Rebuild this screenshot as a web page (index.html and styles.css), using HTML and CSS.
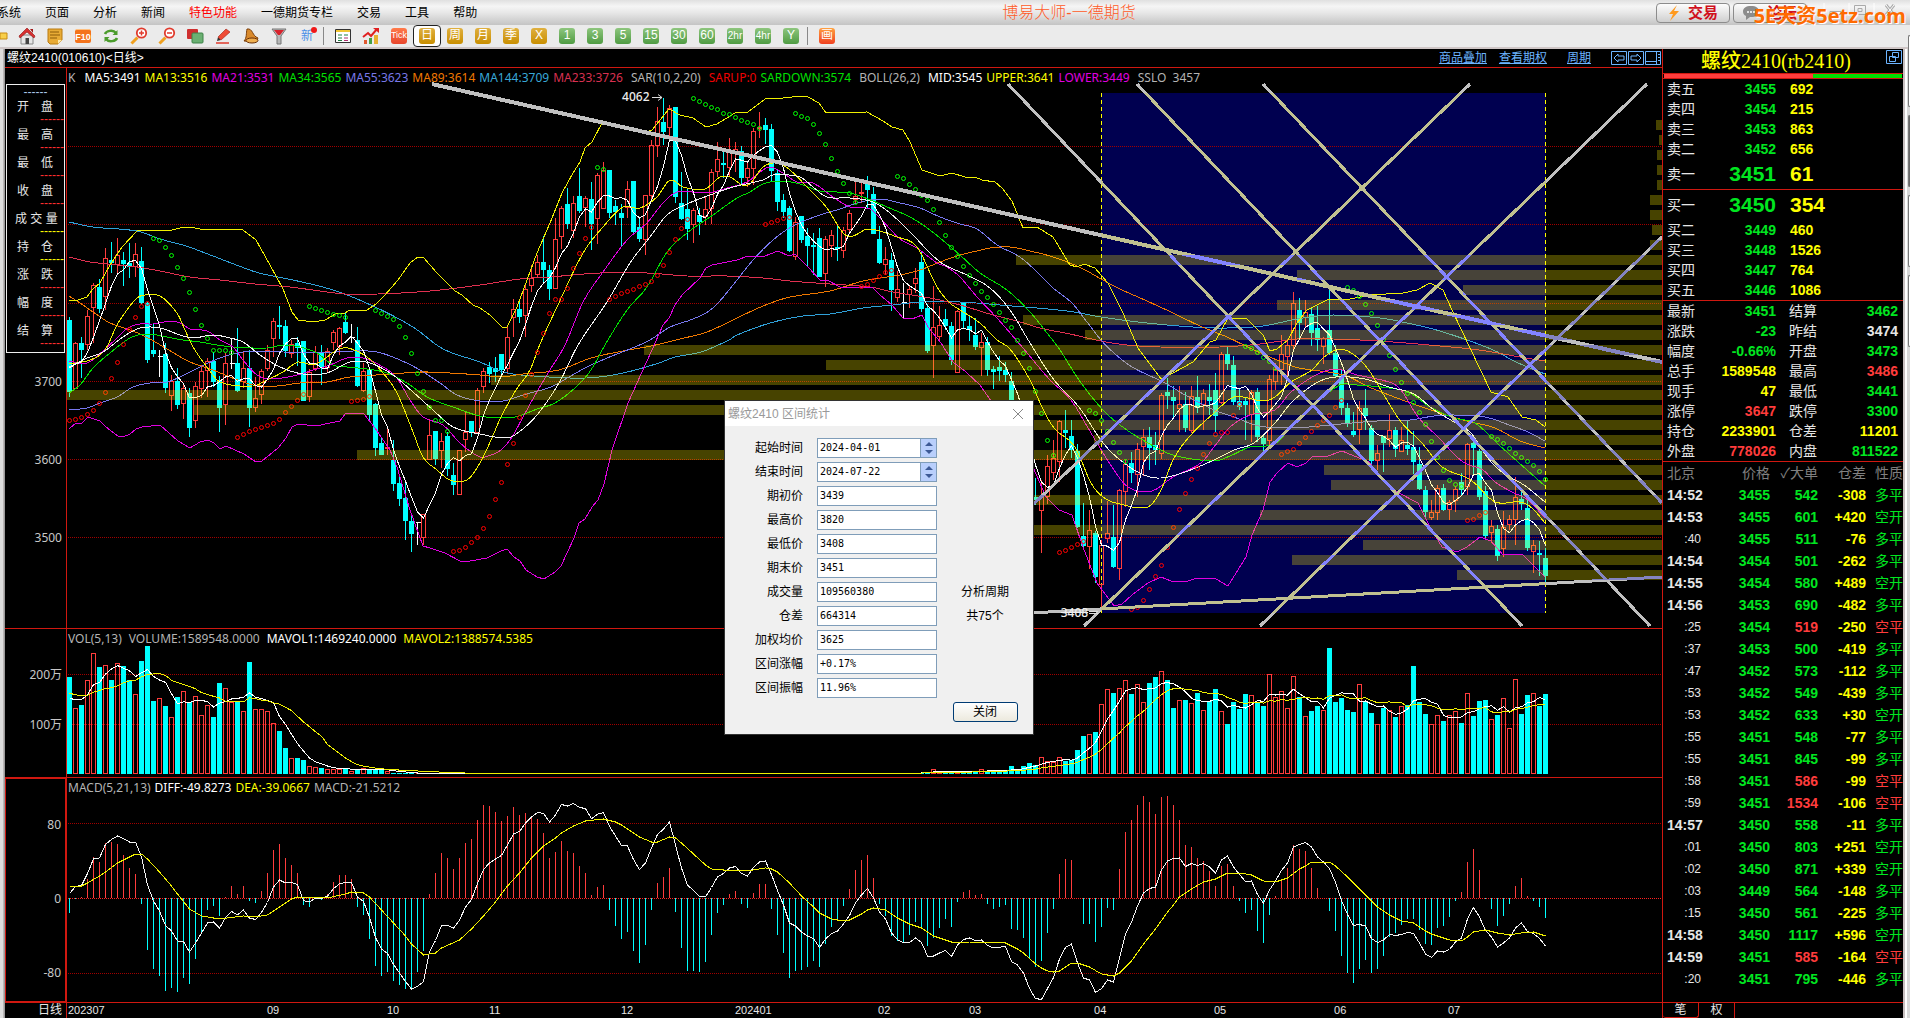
FILE: index.html
```html
<!DOCTYPE html>
<html lang="zh-CN">
<head>
<meta charset="utf-8">
<title>博易大师-一德期货</title>
<link rel="stylesheet" href="styles.css">
</head>
<body>
<div class="app">
  <header class="menubar">
    <nav class="menus">
      <a href="#">系统</a><a href="#">页面</a><a href="#">分析</a><a href="#">新闻</a><a href="#" class="hot">特色功能</a><a href="#">一德期货专栏</a><a href="#">交易</a><a href="#">工具</a><a href="#">帮助</a>
    </nav>
    <h1 class="apptitle">博易大师-一德期货</h1>
    <div class="winbar">
      <button class="pill"><svg width="12" height="16" viewBox="0 0 12 16"><path d="M9 0 1 9h4L2 16 11 6H6z" fill="#ff9a1e"/></svg>交易</button>
      <button class="pill"><svg width="16" height="14" viewBox="0 0 16 14"><path d="M8 0c5 0 8 2 8 5.500S13 11 8 11H7l-4 3V10C1 9 0 7.500 0 5.500 0 2 3 0 8 0z" fill="#8c8c8c"/><circle cx="5" cy="6" r="1" fill="#fff"/><circle cx="8" cy="6" r="1" fill="#fff"/><circle cx="11" cy="6" r="1" fill="#fff"/></svg>论坛</button>
      <svg class="winctl" width="84" height="16" viewBox="0 0 84 16" fill="none" stroke="#aaa"><path d="M2 0v13M27 0v13M52 0v13" stroke="#fff"/><path d="M8 8.500h11v3H8z" fill="#fff"/><path d="M32.500 2.500h11v9h-11zM36 5.500h4v3h-4z"/><path d="m64 2 8 10m0-10-8 10" stroke-width="3"/><path d="m64 2 8 10m0-10-8 10" stroke="#fff"/></svg>
      <span class="watermark">5E天资5etz.com</span>
    </div>
  </header>

  <div class="toolbar" role="toolbar" aria-label="工具栏">
    <button class="tool cut" aria-label="后退"><svg width="8" height="12" viewBox="0 0 8 12"><path d="M0 3h7v6H0z" fill="#f8cf4a" stroke="#c88a10"/></svg></button>
    <button class="tool" aria-label="首页"><svg width="18" height="18" viewBox="0 0 18 18"><path d="M3 8h12v9H3z" fill="#e6e6e6" stroke="#888"/><path d="M9 1 1 9l1 2 7-6 7 6 1-2z" fill="#d93030" stroke="#8a1010" stroke-width=".6"/><path d="M12 2h3v4z" fill="#a01818"/><path d="M7.500 11h3.500v6H7.500z" fill="#444"/></svg></button>
    <button class="tool" aria-label="报价"><svg width="18" height="18" viewBox="0 0 18 18"><path d="M2 2h14v11l-4 4H4l-2-2z" fill="#e8ab35" stroke="#b97a10"/><path d="M4 5h9M4 8h10M4 11h7" stroke="#8b5a08"/><path d="m12 17 4-4h-4z" fill="#ffe9a8"/></svg></button>
    <button class="tool" aria-label="F10"><span class="f10">F10</span></button>
    <button class="tool" aria-label="刷新"><svg width="18" height="18" viewBox="0 0 18 18" fill="none" stroke="#4c9c2c" stroke-width="2.500"><path d="M3 7c1-3 8-5 11-1M15 11c-1 3-8 5-11 1"/><path d="M15.500 3v5h-5zM2.500 15v-5h5z" fill="#4c9c2c" stroke="none"/></svg></button>
    <button class="tool" aria-label="放大"><svg width="18" height="18" viewBox="0 0 18 18" fill="none"><path d="m1.500 16.500 6-6" stroke="#f0a020" stroke-width="3"/><circle cx="11.500" cy="6" r="4.700" fill="#fff" stroke="#e03a2c" stroke-width="1.800"/><path d="M9 6h5M11.500 3.500v5" stroke="#e03a2c" stroke-width="1.500"/></svg></button>
    <button class="tool" aria-label="缩小"><svg width="18" height="18" viewBox="0 0 18 18" fill="none"><path d="m1.500 16.500 6-6" stroke="#f0a020" stroke-width="3"/><circle cx="11.500" cy="6" r="4.700" fill="#fff" stroke="#e03a2c" stroke-width="1.800"/><path d="M9 6h5" stroke="#e03a2c" stroke-width="1.500"/></svg></button>
    <button class="tool" aria-label="叠加"><svg width="18" height="18" viewBox="0 0 18 18"><rect x="1" y="2" width="11" height="10" rx="1" fill="#cf2f2f"/><rect x="6" y="6" width="11" height="10" rx="1" fill="#6bb072" stroke="#3f8248"/></svg></button>
    <button class="tool" aria-label="画线"><svg width="18" height="18" viewBox="0 0 18 18"><path d="M2 16h13" stroke="#e03a2c" stroke-width="1.500"/><path d="m3 14 1-4 3 3z" fill="#333"/><path d="m4 10 8-8 4 3-9 8z" fill="#ef4b35" stroke="#a02014" stroke-width=".6"/></svg></button>
    <button class="tool" aria-label="预警"><svg width="18" height="18" viewBox="0 0 18 18"><path d="M5 2c6-1 5 7 11 9l-2 4L2 14c3-3 2-8 3-12z" fill="#d98a2c" stroke="#7a3d08"/><ellipse cx="10" cy="13.500" rx="6" ry="2.500" fill="#f0b050" stroke="#6b2f08"/></svg></button>
    <button class="tool" aria-label="筛选"><svg width="18" height="18" viewBox="0 0 18 18"><path d="M2 2h14l-5 7v8H7V9z" fill="#b8b8b8" stroke="#777"/><path d="M4 3h10l-4 5H8z" fill="#d8222c"/></svg></button>
    <button class="tool" aria-label="新"><span class="newmark">新</span></button>
    <i class="sep"></i>
    <button class="tool" aria-label="表格"><svg width="18" height="18" viewBox="0 0 18 18"><path d="M1.500 2.500h15v13h-15z" fill="#fff" stroke="#333"/><path d="M2 3h14v2H2z" fill="#f2c530"/><path d="M4 8h4M4 11h4M4 13.500h4M10 8h4" stroke="#208040"/><path d="M10 11h4M10 13.500h4" stroke="#b03070"/></svg></button>
    <button class="tool" aria-label="走势"><svg width="18" height="18" viewBox="0 0 18 18"><path d="M2 13h3v4H2z" fill="#e05a30"/><path d="M7 11h3v6H7z" fill="#45a045"/><path d="M12 8h4v9h-4z" fill="#e8b030"/><path d="m1 10 5-4 3 3 6-7" fill="none" stroke="#e02020" stroke-width="2"/><path d="M11 1h6v5z" fill="#e02020"/></svg></button>
    <button class="tool"><span class="key red">Tick</span></button>
    <button class="tool on"><span class="key gold">日</span></button>
    <button class="tool"><span class="key gold">周</span></button>
    <button class="tool"><span class="key gold">月</span></button>
    <button class="tool"><span class="key gold">季</span></button>
    <button class="tool"><span class="key gold">X</span></button>
    <button class="tool"><span class="key green">1</span></button>
    <button class="tool"><span class="key green">3</span></button>
    <button class="tool"><span class="key green">5</span></button>
    <button class="tool"><span class="key green">15</span></button>
    <button class="tool"><span class="key green">30</span></button>
    <button class="tool"><span class="key green">60</span></button>
    <button class="tool"><span class="key green tight">2hr</span></button>
    <button class="tool"><span class="key green tight">4hr</span></button>
    <button class="tool"><span class="key green">Y</span></button>
    <i class="sep"></i>
    <button class="tool"><span class="key flame">画</span></button>
  </div>

  <main class="workspace">
    <div class="edge left"></div>
    <section class="chart">
      <div class="chart-head">
        <h2>螺纹2410(010610)&lt;日线&gt;</h2>
        <nav>
          <a href="#">商品叠加</a><a href="#">查看期权</a><a href="#">周期</a>
          <svg width="50" height="14" viewBox="0 0 50 14" fill="none" stroke="#6cb4ff"><path d="M.5.5h15v13H.5zM17.500.5h15v13h-15zM34.500.5h15v13h-15z"/><path d="m3 7 4-4v2h6v4H7v2zM30 7l-4-4v2h-6v4h6v2z"/><path d="M34 10.500h12M45.500 1v12"/><path d="M47 3.500h2M47 6.500h2M47 9.500h2"/></svg>
        </nav>
      </div>

      <div class="axis price-axis">
        <div class="databox">
          <span class="dashes blue">------</span>
          <dl>
            <dt>开　盘<dd>------
            <dt>最　高<dd>------
            <dt>最　低<dd>------
            <dt>收　盘<dd>------
            <dt class="wide">成 交 量<dd class="y">------
            <dt>持　仓<dd class="y">------
            <dt>涨　跌<dd>------
            <dt>幅　度<dd>------
            <dt>结　算<dd>------
          </dl>
        </div>
        <span class="tick" style="top:56%">3700</span><span class="tick" style="top:70%">3600</span><span class="tick" style="top:84%">3500</span>
      </div>
      <div class="plot">
        <svg id="price" viewBox="67 68 1595 560" preserveAspectRatio="none"></svg>
        <p class="legend"><span class="k">K</span><span class="w">MA5:3491</span><span class="y">MA13:3516</span><span class="m">MA21:3531</span><span class="g">MA34:3565</span><span class="p">MA55:3623</span><span class="o">MA89:3614</span><span class="b">MA144:3709</span><span class="c">MA233:3726</span><span class="grp">SAR(10,2,20)</span><span class="r">SARUP:0</span><span class="g">SARDOWN:3574</span><span class="grp">BOLL(26,2)</span><span class="w">MID:3545</span><span class="y">UPPER:3641</span><span class="m">LOWER:3449</span><span class="grp">SSLO&nbsp; 3457</span></p>
        <span class="mark high">4062<svg width="13" height="9" viewBox="0 0 13 9" fill="none" stroke="#ddd"><path d="M2 4.500h10M8 1.500l4 3-4 3"/></svg></span>
        <span class="mark low">3408<svg width="10" height="9" viewBox="0 0 10 9" fill="none" stroke="#ddd"><path d="M1 3.500h9M1 5.500h9"/></svg></span>
      </div>

      <div class="axis"><span class="tick" style="top:31%">200万</span><span class="tick" style="top:65%">100万</span></div>
      <div class="plot">
        <svg id="volume" viewBox="67 629 1595 148" preserveAspectRatio="none"></svg>
        <p class="legend loose"><span>VOL(5,13)</span><span>VOLUME:1589548.0000</span><span class="w">MAVOL1:1469240.0000</span><span class="y">MAVOL2:1388574.5385</span></p>
      </div>

      <div class="axis active"><span class="tick" style="top:20.500%">80</span><span class="tick" style="top:54%">0</span><span class="tick" style="top:87.500%">-80</span></div>
      <div class="plot">
        <svg id="macd" viewBox="67 778 1595 224" preserveAspectRatio="none"></svg>
        <p class="legend"><span>MACD(5,21,13)</span><span class="w">DIFF:-49.8273</span><span class="y">DEA:-39.0667</span><span>MACD:-21.5212</span></p>
      </div>

      <div class="axis foot">日线</div>
      <div class="plot dates" id="dates"></div>
    </section>

    <aside class="quote">
      <div class="qhead"><h2>螺纹2410(rb2410)</h2><button aria-label="还原"><svg width="16" height="14" viewBox="0 0 16 14" fill="none" stroke="#6cb4ff"><path d="M.5.5h15v13H.5z"/><path d="M6.500 2.500h6v5h-6zM3.500 6.500h6v5h-6z" fill="#000"/></svg></button></div>
      <div class="ratio"><i class="sell"></i><i class="buy"></i></div>
      <table class="book">
        <tbody>
        <tr><th>卖五<td class="g">3455<td>692
        <tr><th>卖四<td class="g">3454<td>215
        <tr><th>卖三<td class="g">3453<td>863
        <tr><th>卖二<td class="g">3452<td>656
        <tr class="best"><th>卖一<td class="g">3451<td>61
        </tbody>
      </table>
      <table class="book">
        <tbody>
        <tr class="best"><th>买一<td class="g">3450<td>354
        <tr><th>买二<td class="g">3449<td>460
        <tr><th>买三<td class="g">3448<td>1526
        <tr><th>买四<td class="g">3447<td>764
        <tr><th>买五<td class="g">3446<td>1086
        </tbody>
      </table>
      <table class="stats">
        <tbody>
        <tr><th>最新<td class="g">3451<th>结算<td class="g">3462
        <tr><th>涨跌<td class="g">-23<th>昨结<td class="w">3474
        <tr><th>幅度<td class="g">-0.66%<th>开盘<td class="g">3473
        <tr><th>总手<td class="y">1589548<th>最高<td class="r">3486
        <tr><th>现手<td class="y">47<th>最低<td class="g">3441
        <tr><th>涨停<td class="r">3647<th>跌停<td class="g">3300
        <tr><th>持仓<td class="y">2233901<th>仓差<td class="y">11201
        <tr><th>外盘<td class="r">778026<th>内盘<td class="g">811522
        </tbody>
      </table>
      <table class="deals">
        <thead><tr><th>北京<th>价格<th>✓大单<th>仓差<th>性质</thead>
        <tbody>
        <tr><th>14:52<td>3455<td>542<td>-308<td>多平
        <tr><th>14:53<td>3455<td>601<td>+420<td>空开
        <tr><th class="s">:40<td>3455<td>511<td>-76<td>多平
        <tr><th>14:54<td>3454<td>501<td>-262<td>多平
        <tr><th>14:55<td>3454<td>580<td>+489<td>空开
        <tr><th>14:56<td>3453<td>690<td>-482<td>多平
        <tr class="up"><th class="s">:25<td>3454<td>519<td>-250<td>空平
        <tr><th class="s">:37<td>3453<td>500<td>-419<td>多平
        <tr><th class="s">:47<td>3452<td>573<td>-112<td>多平
        <tr><th class="s">:53<td>3452<td>549<td>-439<td>多平
        <tr><th class="s">:53<td>3452<td>633<td>+30<td>空开
        <tr><th class="s">:55<td>3451<td>548<td>-77<td>多平
        <tr><th class="s">:55<td>3451<td>845<td>-99<td>多平
        <tr class="up"><th class="s">:58<td>3451<td>586<td>-99<td>空平
        <tr class="up"><th class="s">:59<td>3451<td>1534<td>-106<td>空平
        <tr><th>14:57<td>3450<td>558<td>-11<td>多平
        <tr><th class="s">:01<td>3450<td>803<td>+251<td>空开
        <tr><th class="s">:02<td>3450<td>871<td>+339<td>空开
        <tr><th class="s">:03<td>3449<td>564<td>-148<td>多平
        <tr><th class="s">:15<td>3450<td>561<td>-225<td>多平
        <tr><th>14:58<td>3450<td>1117<td>+596<td>空开
        <tr class="up"><th>14:59<td>3451<td>585<td>-164<td>空平
        <tr><th class="s">:20<td>3451<td>795<td>-446<td>多平
        </tbody>
      </table>
      <div class="tabs"><button class="cur">笔</button><button>权</button></div>
    </aside>
    <div class="edge right"><i></i><i class="dark"></i><i></i><i></i></div>
  </main>

  <form class="dialog" role="dialog" aria-label="区间统计">
    <div class="dlg-title"><span>螺纹2410 区间统计</span><button type="button" aria-label="关闭窗口"><svg width="12" height="12" viewBox="0 0 12 12" stroke="#888"><path d="m1 1 10 10M11 1 1 11"/></svg></button></div>
    <div class="dlg-body">
      <div class="fields">
        <label for="f1">起始时间</label><span class="spin"><input id="f1" value="2024-04-01"><button type="button" aria-label="调整"><svg width="8" height="14" viewBox="0 0 8 14"><path d="m0 5 4-4 4 4zM0 9l4 4 4-4z" fill="#3d5a96"/></svg></button></span>
        <label for="f2">结束时间</label><span class="spin"><input id="f2" value="2024-07-22"><button type="button" aria-label="调整"><svg width="8" height="14" viewBox="0 0 8 14"><path d="m0 5 4-4 4 4zM0 9l4 4 4-4z" fill="#3d5a96"/></svg></button></span>
        <label for="f3">期初价</label><input id="f3" value="3439">
        <label for="f4">最高价</label><input id="f4" value="3820">
        <label for="f5">最低价</label><input id="f5" value="3408">
        <label for="f6">期末价</label><input id="f6" value="3451">
        <label for="f7">成交量</label><input id="f7" value="109560380">
        <label for="f8">仓差</label><input id="f8" value="664314">
        <label for="f9">加权均价</label><input id="f9" value="3625">
        <label for="f10">区间涨幅</label><input id="f10" value="+0.17%">
        <label for="f11">区间振幅</label><input id="f11" value="11.96%">
      </div>
      <div class="side"><p>分析周期</p><p>共75个</p><button type="button" class="ok">关闭</button></div>
    </div>
  </form>
</div>
<script src="chart.js"></script>
</body>
</html>
```
FILE: styles.css
```css
* { box-sizing: border-box; margin: 0; padding: 0; }
body { background: #000; font: 12px/14px "Liberation Sans", "Noto Sans CJK SC", sans-serif; color: #e6e6e6; overflow: hidden; }
button { border: 0; background: none; font: inherit; color: inherit; }
a { color: inherit; text-decoration: none; }
i { font-style: normal; }
.app { position: relative; height: 100vh; min-height: 760px; display: grid; grid-template-rows: 25px 24px 1fr; }

.menubar { display: grid; grid-template-columns: 1002fr auto 774fr; align-items: center; background: linear-gradient(#e0e0e0, #f5f5f5 25%, #e8e8e8 50%, #c4c4c4); color: #000; }
.menus { display: flex; gap: 24px; margin-left: -3px; white-space: nowrap; }
.menus .hot { color: #f00; }
.apptitle { font: 300 16px/24px "Liberation Sans", "Noto Sans CJK SC", sans-serif; color: #ff5a26; white-space: nowrap; }
.winbar { position: relative; display: flex; justify-content: flex-end; gap: 3px; padding-right: 4px; }
.pill { display: flex; align-items: center; justify-content: center; gap: 8px; width: 74px; height: 20px; border: 1px solid #8c8c8c; border-radius: 4px; background: linear-gradient(#fdfdfd, #cfcfcf); color: #d0101c; font-size: 15px; font-weight: 700; }
.winctl { margin-left: 12px; }
.watermark { position: absolute; right: 4px; top: 1px; font: 700 20px/24px "Open Sans", "Noto Sans CJK SC", sans-serif; color: #ff6a00; text-shadow: 1px 1px #fff; }

.toolbar { display: flex; align-items: center; background: #ebebeb; border-bottom: 2px solid #cfc6c6; }
.tool { width: 28px; height: 22px; display: flex; align-items: center; justify-content: center; flex: none; }
.tool.cut { width: 13px; justify-content: flex-start; }
.tool.on { border: 1px solid #222; border-radius: 4px; background: #fff; }
.sep { width: 8px; height: 18px; background: linear-gradient(90deg, transparent 2px, #888 2px, #888 3px, transparent 3px); }
.key { width: 16px; height: 16px; border-radius: 3px; font: 12px/15px "Liberation Sans", "Noto Sans CJK SC", sans-serif; color: #fff; text-align: center; display: flex; justify-content: center; }
.gold { background: linear-gradient(#dfb040, #c98e00); }
.green { background: linear-gradient(#8ec67e, #4f9b42); }
.red { background: linear-gradient(#ff7a4a, #e8452c); font-size: 9px; }
.tight { font-size: 10px; }
.flame { background: linear-gradient(#ffa040, #f04020); }
.f10 { width: 16px; height: 14px; border-radius: 2px; background: #f4731c; color: #fff; font: 700 9px/14px "Liberation Sans", sans-serif; border-top: 1px solid #ffc080; display: flex; justify-content: center; }
.newmark { position: relative; color: #4a90e8; font-size: 12px; }
.newmark::after { content: ""; position: absolute; right: -4px; top: -2px; width: 6px; height: 6px; border-radius: 50%; background: #f01818; }

.workspace { display: grid; grid-template-columns: 5px 1fr 240px 7px; min-height: 0; }
.edge.left { background: linear-gradient(90deg, #ddd 3px, #aaa 3px, #c8c0c0); border-right: 1px solid #999; }
.edge.right { border-left: 2px solid #c8c0c0; background: linear-gradient(90deg, #fff 2px, #d8d8d8 2px); padding: 20px 0 0 3px; }
.edge.right i { display: block; height: 72px; margin: 0 0 8px; background: #fff; border: 1px solid #777; border-right: 0; border-radius: 4px 0 0 4px; }
.edge.right .dark { background: #666; }
.edge.right i:first-child { margin-top: -34px; }

.chart { display: grid; grid-template-columns: 62px 1fr; grid-template-rows: 19px 561fr 149fr 225fr 15px; border-right: 1px solid #d01810; min-width: 0; min-height: 0; }
.chart-head { grid-column: 1 / 3; display: flex; justify-content: space-between; align-items: center; padding: 0 1px 0 2px; border-bottom: 1px solid #d01810; }
.chart-head h2 { font-size: 12px; font-weight: 400; color: #fff; }
.chart-head nav { display: flex; align-items: center; color: #6cb4ff; }
.chart-head a { margin-right: 12px; text-decoration: underline; }
.chart-head a + a { margin-right: 20px; }
.axis { position: relative; border-right: 1px solid #d01810; border-bottom: 1px solid #d01810; }
.axis.active { border: 1px solid #d01810; border-width: 1px 2px 2px 1px; }
.axis.foot { border-bottom: 0; text-align: right; padding-right: 4px; }
.plot { position: relative; border-bottom: 1px solid #d01810; min-width: 0; min-height: 0; }
.plot > svg { position: absolute; inset: 0; width: 100%; height: 100%; }
.plot.dates { border: 0; }
.dates span { position: absolute; top: 0; font-size: 11px; line-height: 15px; }
.tick { position: absolute; right: 4px; height: 14px; margin-top: -7px; font: 12px/14px "Noto Sans", "Noto Sans CJK SC", sans-serif; color: #c8c8c8; }
.databox { margin: 16px 1px 0 1px; height: 269px; border: 1px solid #eee; padding-top: 1px; }
.databox .dashes { display: block; text-align: center; line-height: 12px; }
.databox .blue { color: #a8c8e8; }
.databox dt { height: 18px; line-height: 18px; padding-left: 10px; white-space: nowrap; }
.databox dt.wide { padding-left: 8px; }
.databox dd { height: 10px; line-height: 7px; text-align: right; color: #ff3030; }
.databox dd.y { color: #ff0; }
.legend { position: absolute; left: 1px; top: 3px; display: flex; gap: 4px; font: 12px/14px "Noto Sans", sans-serif; color: #b4b4b4; white-space: nowrap; }
.legend.loose { gap: 7px; }
.legend .k { margin-right: 5px; }
.legend .grp { margin: 0 4px; }
.legend .w { color: #fff; }
.legend .y { color: #ff0; }
.legend .m { color: #e000e0; }
.legend .g { color: #00e000; }
.legend .p { color: #7878e8; }
.legend .o { color: #f07800; }
.legend .b { color: #38a8d8; }
.legend .c { color: #d83050; }
.legend .r { color: #f00000; }
.mark { position: absolute; display: flex; align-items: center; font: 500 12px/14px "Noto Sans", sans-serif; color: #eee; }
.mark.high { left: 34.800%; top: 4%; }
.mark.low { left: 62.300%; top: 96%; text-decoration: line-through; }

.quote { display: flex; flex-direction: column; min-height: 0; font-size: 14px; }
.qhead { position: relative; height: 24px; text-align: center; padding-right: 14px; }
.qhead h2 { font: 500 20px/25px "Liberation Serif", "Noto Sans CJK SC", serif; color: #ff0; }
.qhead button { position: absolute; right: 1px; top: 1px; height: 14px; display: flex; }
.ratio { height: 6px; display: flex; border: 1px solid #d01810; border-width: 1px 0; padding: 0 1px; }
.sell { flex: 150; background: #ff3c3c; }
.buy { flex: 89; background: #00e000; }
table { border-collapse: collapse; table-layout: fixed; width: 100%; }
.quote th { font-weight: 400; text-align: left; padding: 0; }
.quote td { font-weight: 700; padding: 0; }
.book { border-bottom: 1px solid #d01810; }
.book tr, .stats tr { height: 20px; line-height: 20px; }
.book tr.best { height: 30px; line-height: 30px; }
.book th { width: 59px; }
.book td:nth-child(2) { width: 54px; text-align: right; }
.book td:nth-child(3) { padding-left: 14px; color: #ff0; }
.best td { font-size: 21px; }
.quote .book th, .quote .stats th { padding-left: 4px; }
.stats { border-bottom: 1px solid #d01810; }
.stats th { width: 45px; }
.stats td:nth-child(2) { width: 68px; text-align: right; }
.stats th:nth-child(3) { width: 55px; }
.quote .stats th:nth-child(3) { padding-left: 13px; }
.stats td:nth-child(4) { text-align: right; padding-right: 5px; }
.quote .g { color: #00e620; }
.quote .y { color: #ff0; }
.quote .r { color: #ff3c3c; }
.quote .w { color: #e6e6e6; }
.deals tr { height: 22px; line-height: 22px; white-space: nowrap; }
.quote .deals thead th { color: #808080; text-align: right; }
.deals th:first-child { width: 50px; }
.quote .deals thead th:first-child { text-align: left; padding-left: 4px; }
.deals th:nth-child(2) { width: 57px; }
.deals th:nth-child(3), .deals th:nth-child(4) { width: 48px; }
.quote .deals tbody th { font-weight: 700; padding-left: 4px; }
.quote .deals tbody th.s { font-weight: 400; font-size: 12px; text-align: right; padding-right: 12px; }
.deals td { text-align: right; color: #00e620; }
.deals td:nth-child(4) { color: #ff0; }
.quote .deals td:nth-child(5) { font-weight: 400; }
.up td:nth-child(3), .up td:nth-child(5) { color: #ff3c3c; }
.tabs { margin-top: auto; height: 16px; display: flex; border-top: 1px solid #d01810; font-size: 12px; }
.tabs button { width: 36px; border-right: 1px solid #d01810; line-height: 15px; }
.tabs .cur { border-bottom: 1px solid #d01810; border-radius: 0 0 3px 3px; background: #000; }

.dialog { position: absolute; left: 724px; top: 400px; width: 310px; border: 1px solid #333; background: #f0f0f0; color: #000; }
.dlg-title { height: 25px; background: #fff; display: flex; justify-content: space-between; align-items: center; padding: 0 9px 0 3px; color: #999; }
.dlg-title button { height: 12px; }
.dlg-body { display: flex; align-items: flex-start; padding: 12px 0 12px 21px; }
.fields { display: grid; grid-template-columns: 57px 112px; grid-auto-rows: 20px; column-gap: 14px; row-gap: 4px; align-items: center; text-align: right; }
.fields { grid-template-columns: 57px 120px; }
.fields input { width: 100%; height: 20px; border: 1px solid #7f9db9; background: #fff; padding: 0 0 2px 2px; font: 10px/16px "DejaVu Sans Mono", monospace; color: #000; }
.spin { display: flex; border: 1px solid #7f9db9; height: 20px; }
.fields .spin input { border: 0; height: 18px; flex: 1; min-width: 0; }
.spin button { width: 16px; background: #b9cffc; border-left: 1px solid #7f9db9; display: flex; align-items: center; justify-content: center; }
.side { flex: 1; text-align: center; padding-top: 147px; }
.side p { height: 24px; }
.ok { width: 65px; height: 20px; margin-top: 69px; border: 1px solid #003c74; border-radius: 3px; background: linear-gradient(#fff, #ece9dd); }
```
FILE: chart.js
```js
var NS = 'http://www.w3.org/2000/svg';
var X0 = 69.5, STEP = 6;
function X(i) { return X0 + STEP * i; }
function add(host, tag, attrs) {
  var e = document.createElementNS(NS, tag);
  for (var k in attrs) e.setAttribute(k, attrs[k]);
  host.appendChild(e);
  return e;
}
function path(host, d, stroke, more) {
  var a = { d: d, stroke: stroke, fill: 'none', 'shape-rendering': 'crispEdges' };
  for (var k in more) a[k] = more[k];
  return add(host, 'path', a);
}
function poly(pts) { return 'M' + pts.map(function (p) { return p[0] + ' ' + p[1]; }).join('L'); }
function pairs(s) {
  return s.trim().split(/\s+/).map(function (p) { return p.split(',').map(Number); });
}
/* smooth curve through the key points */
function curve(s) {
  var p = pairs(s), out = [];
  for (var i = 0; i < p.length - 1; i++) {
    var a = p[Math.max(0, i - 1)], b = p[i], c = p[i + 1], e = p[Math.min(p.length - 1, i + 2)];
    var m1 = (c[1] - a[1]) / (c[0] - a[0]) * (c[0] - b[0]);
    var m2 = (e[1] - b[1]) / (e[0] - b[0]) * (c[0] - b[0]);
    for (var t = 0; t < 1; t += 0.25) {
      var t2 = t * t, t3 = t2 * t;
      out.push([b[0] + (c[0] - b[0]) * t,
        (2 * t3 - 3 * t2 + 1) * b[1] + (t3 - 2 * t2 + t) * m1 + (3 * t2 - 2 * t3) * c[1] + (t3 - t2) * m2]);
    }
  }
  out.push(p[p.length - 1]);
  return poly(out);
}

/* kind, high, body top, body bottom, low */
var candles = ('c317,320,392,397 r342,343,389,389 c337,343,350,378 r310,316,345,350 r283,285,308,343 c279,287,309,313 r248,258,297,310 c242,260,263,273 r238,255,265,275 c252,260,264,286 ' +
'c243,263,267,278 r243,254,267,277 c247,261,303,304 c302,303,360,363 c323,350,354,357 w350,356,357,377 c343,354,388,393 r375,381,396,411 c368,381,405,409 r384,388,404,419 ' +
'c388,393,428,437 r382,386,421,428 r365,371,389,398 r358,361,371,397 c352,361,382,387 c376,381,408,432 r353,363,405,425 w338,363,364,369 c328,363,391,392 r352,368,382,388 ' +
'c350,368,408,427 r377,398,408,412 r369,371,395,404 r345,350,369,371 r318,321,339,357 c306,325,327,339 c320,326,351,357 r340,344,354,358 c337,343,348,366 c341,341,401,401 ' +
'r369,372,397,402 r346,352,369,371 c345,352,367,385 r348,351,368,372 r330,332,343,350 r327,328,347,355 c312,322,333,334 w324,337,338,343 c327,340,386,387 r363,371,391,392 ' +
'c368,370,415,421 c403,404,448,456 c438,443,455,455 r426,447,449,455 c440,460,484,491 c475,483,499,506 c480,498,521,540 c514,521,534,552 w522,522,523,545 r514,514,538,545 ' +
'r419,435,460,460 c431,431,459,465 r433,441,451,468 c432,436,469,476 c463,475,485,495 r450,450,495,495 r412,432,440,452 c421,421,433,437 r388,390,433,433 r368,371,387,393 ' +
'c362,367,374,383 c357,368,372,382 c354,354,370,374 r327,337,369,374 r299,309,318,337 c302,309,317,323 r283,289,316,337 r265,278,286,292 r255,262,275,278 c236,262,270,283 ' +
'c265,270,289,300 r218,239,289,289 r206,208,237,249 c188,204,224,229 r196,203,231,238 c168,196,211,213 r196,198,208,227 c182,199,224,250 r173,175,219,244 r162,170,209,209 ' +
'c170,170,213,218 c200,206,212,225 c204,213,218,247 r181,189,208,218 c181,181,232,235 c218,227,239,242 r195,195,240,255 r140,145,196,202 r107,121,146,157 c98,122,132,145 ' +
'r105,108,128,138 c107,107,197,203 c172,203,219,220 c189,209,229,240 r208,210,225,243 c208,215,222,235 r197,209,217,225 r169,172,209,224 r142,159,172,177 c152,163,165,178 ' +
'r138,150,168,177 r142,149,152,172 c146,151,178,184 r163,168,178,187 r128,131,169,185 r112,127,129,138 c118,125,130,144 c124,129,171,182 c169,173,202,211 c194,200,212,218 ' +
'c206,208,251,252 r217,222,257,260 c216,216,240,243 c228,236,246,267 c233,245,247,275 c228,238,277,277 r236,239,274,287 r230,235,246,257 c225,247,249,261 r227,230,251,258 ' +
'r210,213,230,232 r182,196,200,203 r180,192,194,203 c176,183,190,208 c187,194,234,234 c226,239,263,264 r247,259,265,275 c253,260,290,311 r271,289,298,302 w283,302,302,318 ' +
'r285,289,295,308 r268,278,284,293 c252,262,309,312 c304,308,351,353 r286,327,346,378 r306,325,337,342 c309,319,326,330 c322,326,360,365 r310,311,373,373 c303,303,321,328 ' +
'c315,326,330,341 c318,335,347,350 r333,342,348,376 c337,342,370,376 c366,369,372,389 c356,367,371,381 c362,370,375,382 c372,381,410,415 c405,412,440,450 c430,440,470,480 ' +
'c465,470,505,510 c478,497,500,505 r480,496,511,553 r455,466,497,504 r440,458,473,480 r420,421,462,482 c410,430,433,448 c420,436,450,458 c444,451,527,528 c503,536,546,550 ' +
'r510,530,547,569 c531,533,577,583 r540,545,585,610 r501,533,539,543 c505,537,567,568 r489,490,569,580 r460,464,492,507 c452,463,473,483 r443,449,475,497 r429,437,447,476 ' +
'c427,437,448,470 c432,445,450,465 r393,395,454,459 c378,392,396,409 c386,397,401,418 r386,404,409,432 c392,404,428,432 r386,396,431,433 c376,397,408,413 r389,393,405,430 ' +
'c384,397,401,415 c373,390,416,432 r352,354,403,404 c347,354,364,370 c356,365,402,405 c388,401,407,410 c397,401,405,440 r390,392,415,442 c388,392,437,442 c434,438,444,451 ' +
'r375,379,441,445 r363,369,382,390 r335,354,370,385 r340,345,357,376 r292,303,346,350 c298,310,323,340 r300,312,318,328 c308,314,333,346 c306,328,340,351 r337,338,347,364 ' +
'c287,330,353,355 c345,353,376,378 c369,376,408,415 c403,408,424,427 c412,431,435,437 r401,408,430,444 c389,408,416,430 c425,428,461,465 r445,453,461,470 c436,436,443,472 ' +
'r414,430,439,447 c427,430,449,457 r427,440,452,452 c421,445,449,455 c431,447,462,474 c447,464,489,490 c486,490,512,517 r500,512,518,520 r485,488,513,520 c484,488,510,511 ' +
'r500,502,510,520 r486,489,501,512 c473,482,490,495 r443,444,487,495 c436,443,448,476 c449,451,497,500 c486,491,536,538 r520,526,533,543 c525,529,556,561 r511,527,549,557 ' +
'r515,519,525,530 r477,497,520,545 c490,499,504,510 c500,508,548,551 r540,545,552,573 c541,553,555,576 c548,558,576,584').split(' ').map(function (s) {
  return [s[0]].concat(s.slice(1).split(',').map(Number));
});

var price = document.getElementById('price');
add(price, 'rect', { x: 1101, y: 93, width: 445, height: 520, fill: '#000050' });
[146, 224, 303, 381, 459, 537].forEach(function (y) {
  path(price, 'M68 ' + (y + 0.5) + 'H1662', '#a00000', { 'stroke-dasharray': '1 1' });
});
path(price, 'M1101.5 93V613M1545.5 93V613', '#ffff00', { 'stroke-dasharray': '4 3' });

var cy = '', cyw = '', rd = '', wh = '';
candles.forEach(function (c, i) {
  var x = X(i), t = c[2], b = Math.max(c[3], c[2] + 1);
  if (c[0] === 'c') {
    cy += 'M' + (x - 2.5) + ' ' + t + 'h5V' + b + 'h-5z';
    cyw += 'M' + x + ' ' + c[1] + 'V' + c[4];
  } else if (c[0] === 'r') {
    rd += 'M' + (x - 2) + ' ' + (t + 0.5) + 'h4V' + (b - 0.5) + 'h-4zM' + x + ' ' + c[1] + 'V' + t + 'M' + x + ' ' + b + 'V' + c[4];
  } else {
    wh += 'M' + x + ' ' + c[1] + 'V' + c[4] + 'M' + (x - 2) + ' ' + (t + 0.5) + 'h5';
  }
});
path(price, cy, 'none', { fill: '#00ffff' });
path(price, cyw, '#00ffff');
path(price, rd, '#ff3c3c');
path(price, wh, '#ffffff');

var closes = [362, 362, 362, 362].concat(candles.map(function (c) { return c[0] === 'c' ? c[3] : c[2]; }));
function average(arr, n, skip) {
  return arr.slice(skip).map(function (_, k) {
    var s = 0;
    for (var j = 0; j < n; j++) s += arr[k + skip - j];
    return [X(k), s / n];
  });
}

path(price, curve('69,222 93,227 137,231 160,239 186,246 213,256 239,266 259,273 293,280 333,290 373,306 413,327 443,349 480,362 503,372 534,376 587,378 623,373 659,363 675,357 701,352 729,340 737,335 770,323 803,316 830,314 863,308 893,305 920,302 960,302 1000,305 1067,311 1101,317 1147,323 1193,327 1227,328 1263,326 1297,319 1333,315 1380,318 1407,323 1440,331 1491,349 1516,362 1545,374'), '#30a0d8');
path(price, curve('69,257 90,262 137,267 160,271 190,277 220,280 255,284 290,287 320,291 345,294 378,294 430,291 480,285 520,279 550,277 573,275 600,273 647,273 687,276 727,276 763,278 790,281 830,284 870,287 893,292 930,298 960,305 993,315 1017,321 1040,328 1070,334 1101,341 1127,345 1160,347 1220,347 1260,344 1297,339 1333,339 1360,340 1393,342 1440,346 1479,350 1520,357 1545,361'), '#e03050');
path(price, curve('69,296 80,303 93,312 110,323 133,331 150,339 167,349 190,362 213,370 230,377 253,385 277,386 300,383 327,382 350,377 393,374 420,372 450,373 480,375 501,377 523,374 559,370 591,358 623,351 651,346 680,339 707,332 737,318 763,306 790,297 830,291 863,281 900,275 920,270 940,262 960,255 977,251 990,248 1010,247 1030,251 1050,256 1070,263 1087,271 1101,279 1120,289 1147,301 1173,313 1200,326 1227,337 1254,350 1277,360 1299,368 1344,375 1369,387 1397,398 1422,407 1446,415 1471,422 1495,428 1520,441 1545,448'), '#f07800');
path(price, curve('69,410 87,408 100,403 117,397 133,387 150,383 167,382 180,377 200,367 220,358 243,352 283,352 317,353 353,351 377,352 400,360 420,370 440,383 457,395 480,401 503,401 523,395 551,387 569,377 587,367 612,356 630,349 650,340 670,327 693,319 713,308 733,285 753,260 773,240 793,226 817,216 840,209 857,203 880,199 900,203 920,208 940,217 960,224 977,229 997,245 1020,257 1037,272 1053,288 1072,303 1087,322 1101,340 1114,353 1132,367 1165,383 1185,395 1214,410 1234,417 1259,426 1291,428 1320,426 1352,423 1377,421 1410,420 1434,416 1454,415 1485,417 1512,426 1528,432 1545,441'), '#7878f0');
path(price, curve('69,393 80,385 93,368 110,353 130,338 147,334 167,337 183,340 200,342 217,345 233,347 267,348 283,345 300,347 317,353 333,365 347,367 367,369 387,373 407,383 427,397 453,407 480,416 505,418 519,416 537,409 555,403 576,387 591,370 605,345 627,310 647,287 667,252 687,233 713,215 737,198 750,192 763,184 780,181 800,184 820,191 850,193 873,201 887,207 910,217 930,230 960,255 980,273 1007,290 1030,312 1047,333 1060,350 1079,380 1103,410 1124,428 1148,443 1173,455 1214,461 1230,456 1250,447 1275,444 1291,427 1316,403 1340,385 1357,385 1389,388 1410,393 1430,407 1454,418 1475,423 1499,445 1545,486'), '#00e000');
path(price, curve('69,361 87,363 104,350 117,338 128,328 140,324 153,324 172,321 182,324 190,329 207,331 220,340 233,347 243,360 257,375 270,379 293,376 310,371 330,365 347,358 363,358 383,367 397,378 410,400 423,417 443,425 460,443 480,457 491,455 501,450 512,437 523,417 534,397 548,373 565,345 583,302 603,272 627,240 647,223 663,203 677,192 707,193 727,188 747,182 760,172 770,167 783,173 797,182 813,183 833,197 850,207 870,209 880,218 900,239 917,248 937,263 947,267 960,277 977,297 997,318 1023,348 1050,380 1071,400 1091,433 1112,467 1128,487 1152,491 1173,477 1201,463 1214,447 1230,427 1250,415 1275,410 1291,392 1316,375 1336,369 1357,375 1389,382 1401,390 1418,417 1438,437 1463,462 1483,470 1495,482 1512,492 1528,500 1545,518'), '#e000e0');
path(price, curve('69,364 90,360 105,350 117,325 127,310 137,298 145,295 160,296 177,313 185,330 193,347 207,367 220,382 253,386 267,380 283,372 298,362 313,365 323,360 337,350 348,348 367,357 383,373 397,393 413,432 423,457 437,470 450,480 467,480 480,463 491,440 501,417 516,390 530,370 540,344 557,307 583,253 603,227 623,207 640,208 657,197 670,180 683,187 705,189 720,177 730,177 747,186 763,167 777,163 790,170 807,187 827,208 843,233 853,236 868,229 897,237 917,247 937,287 950,303 960,310 980,323 997,340 1010,349 1030,380 1042,407 1054,428 1075,447 1091,483 1103,497 1116,503 1148,507 1161,490 1173,460 1189,437 1214,413 1234,397 1263,401 1275,397 1291,382 1312,370 1324,357 1342,349 1365,365 1385,397 1401,422 1422,443 1442,467 1471,480 1495,502 1520,502 1532,508 1545,523'), '#f0f000');
path(price, curve('69,367 87,358 103,352 123,337 140,328 160,328 180,335 193,338 213,335 230,338 243,342 260,355 280,367 303,374 327,373 350,362 370,363 393,375 413,392 433,410 453,427 480,434 507,438 519,432 537,415 559,383 578,345 607,302 630,263 650,237 667,215 687,204 710,195 733,187 763,180 773,175 800,177 813,187 827,197 850,198 873,202 890,213 910,232 940,262 967,275 990,288 1010,310 1030,343 1054,380 1079,407 1103,443 1124,463 1144,475 1161,478 1185,472 1214,460 1234,450 1254,443 1275,423 1291,403 1316,383 1336,377 1365,379 1389,387 1414,394 1434,410 1454,422 1471,433 1487,457 1503,473 1524,485 1545,502'), '#f4f4f4');
path(price, poly(pairs('69,300 78,300 87,297 93,289 100,283 110,265 122,247 137,231 160,230 172,230 180,228 190,227 200,229 230,229 243,230 256,240 270,265 283,289 292,312 298,320 313,322 325,320 337,313 345,313 350,310 367,310 376,304 385,295 398,280 410,263 418,257 423,257 437,273 455,291 462,295 473,305 480,308 490,315 502,327 507,327 517,307 527,280 537,253 550,223 562,193 573,173 580,162 585,148 592,142 603,121 623,126 643,133 652,130 669,109 680,115 693,118 706,127 717,124 735,113 748,112 765,99 783,98 802,96 808,97 819,103 826,113 867,112 883,121 892,127 903,130 910,142 922,170 940,176 952,173 965,177 975,177 982,180 995,182 1002,188 1012,201 1023,228 1037,227 1053,237 1070,265 1077,267 1084,264 1095,268 1108,283 1123,313 1138,348 1161,379 1173,373 1193,362 1210,342 1216,340 1228,318 1246,318 1263,335 1270,351 1277,349 1288,340 1297,323 1307,310 1327,300 1350,299 1370,295 1403,293 1417,290 1430,283 1443,290 1453,312 1470,348 1491,392 1508,397 1522,417 1536,420 1545,427')), '#f0f000');
path(price, poly(pairs('69,429 76,423 82,423 88,417 100,421 106,427 118,436 123,437 130,434 136,429 142,427 160,425 178,441 190,448 200,442 208,440 214,443 220,449 226,446 244,454 256,462 262,461 278,448 286,438 292,427 298,424 316,426 330,423 340,421 346,413 364,414 375,428 390,450 397,467 410,510 423,546 430,548 445,553 460,561 470,561 487,558 501,551 507,549 514,557 520,561 526,570 537,577 544,579 555,572 561,566 574,538 579,523 585,519 592,507 598,500 604,484 612,450 628,403 637,383 652,350 663,325 669,318 675,305 682,295 700,278 706,268 712,265 727,262 737,260 748,256 765,256 778,251 789,256 795,254 808,267 820,280 827,280 840,287 867,287 873,288 880,295 892,305 903,318 912,319 922,315 928,327 941,343 953,362 966,372 980,385 991,401 1010,430 1033,467 1046,497 1059,510 1072,515 1083,547 1097,583 1114,606 1122,604 1132,595 1148,583 1161,577 1171,581 1185,582 1197,578 1216,579 1228,586 1246,557 1252,535 1263,510 1270,482 1277,473 1288,463 1297,467 1306,463 1312,457 1328,456 1342,451 1369,462 1383,480 1397,492 1418,503 1430,527 1442,547 1457,552 1467,547 1480,537 1491,541 1503,555 1522,554 1536,568 1545,577')), '#e000e0');
path(price, poly(average(closes, 5, 4)), '#ffffff');

/* stop-and-reverse dots: colour, first bar, values */
[['r', 0, '420 419 417 414 410 403 392 378 362 344 329 317 306 303'],
 ['g', 14, '238 240 247 255 267 278 292 309 325 338 350 350 350 352'],
 ['r', 28, '437 434 431 429 427 425 423 419 412 406 400 394'],
 ['g', 40, '306 308 310 312 314 315 317'],
 ['r', 47, '401 400 399 396'],
 ['g', 51, '310 313 316 319 326 337 353 373 391 407 420 420 431'],
 ['r', 64, '551 550 547 542 537 528 516 499 482 464 443 417 395 374 352 333 313 299 299 288 268 253 238 227'],
 ['g', 88, '167 169'],
 ['r', 90, '299 296 293 291 289 286 284 281 275 265 252 239 228 219'],
 ['g', 104, '98 101 104 107 109 113 114 117 120 122 124 128'],
 ['r', 116, '224 222 220 218 217'],
 ['g', 121, '113 116 118 124 133 144 158 171 183 193 202'],
 ['r', 132, '286 284 280 276 272 270'],
 ['g', 138, '176 178 184 189 195 200 209 222 235 247 256 266 275 283 291 297 304 312 320 327 340 353 368 391 413 440 455'],
 ['r', 165, '552 550 547 544 541'],
 ['g', 170, '410 413 420 431 442 452 461'],
 ['r', 177, '609 607 600 589 576 565 547 527 509 493 479 468 454 443 434 432 432 415 404'],
 ['g', 196, '346 348 352 357 361 368'],
 ['r', 202, '454 451 449 443 437 431 425 420 415 407 400'],
 ['g', 213, '287 290 296 304 313 325 339 355 369 382 393 402 412 424 441 457 470 480 484 486'],
 ['r', 233, '520 519 515 512'],
 ['g', 237, '436 439 443 448 453 457 461 465 471 479']
].forEach(function (run) {
  run[2].split(' ').forEach(function (y, k) {
    add(price, 'circle', { cx: X(run[1] + k), cy: +y + 0.5, r: 2, fill: 'none', stroke: run[0] === 'r' ? '#ff0000' : '#00ff00' });
  });
});

/* volume-by-price bands, one every 15 units starting at y = 120 */
var defs = add(price, 'defs', {});
var inBands = add(defs, 'clipPath', { id: 'in-bands' });
var inRange = add(defs, 'clipPath', { id: 'in-range' });
add(inRange, 'rect', { x: 1101, y: 93, width: 445, height: 520 });
[1656, 1659, 1657, 1657, 1657, 1650, 1650, 1652, 1650, 1016, 1297, 1463, 1277, 1023, 1085, 644, 826, 491, 67, 194, 800, 1094, 357, 1324, 1331, 900, 1260, 900, 1363, 1292, 1457].forEach(function (x, k) {
  var box = { x: x, y: 120 + 15 * k, width: 1662 - x, height: 10 };
  add(inBands, 'rect', box);
  add(price, 'rect', box).setAttribute('class', 'band');
});
price.querySelectorAll('.band').forEach(function (b) {
  b.setAttribute('fill', '#fff000');
  b.setAttribute('opacity', 0.28);
});

/* trend and gann lines: their colour changes over the marked range and over the bands */
var lines = [[432, 84, 1662, 362, 4], [1008, 84, 1522, 626], [1137, 84, 1650, 626], [1263, 84, 1662, 503],
 [1084, 626, 1647, 84], [1260, 626, 1662, 237], [907, 626, 1470, 84], [960, 617, 1662, 577, 3]];
function gann(host, colour) {
  lines.forEach(function (l) {
    path(host, 'M' + l[0] + ' ' + l[1] + 'L' + l[2] + ' ' + l[3], colour, { 'stroke-width': l[4] || 3 });
  });
}
gann(price, '#c0c0c0');
gann(add(price, 'g', { 'clip-path': 'url(#in-range)' }), '#c0c090');
gann(add(price, 'g', { 'clip-path': 'url(#in-bands)' }), '#8484c0');
gann(add(add(price, 'g', { 'clip-path': 'url(#in-range)' }), 'g', { 'clip-path': 'url(#in-bands)' }), '#8484ff');

/* volume bars: y of each top */
var vol = '677 708 705 680 653 667 665 680 663 666 680 694 661 646 701 698 706 717 697 691 702 696 715 705 717 683 688 702 702 711 662 709 709 711 723 731 748 758 758 760 766 767 768 769 769 769 768 771 770 768 770 770 770 771'.split(' ').map(Number);
while (vol.length < 143) vol.push(773);
vol = vol.concat('772 769 772 772 771 772 772 772 771 769 771 771 771 771 766 770 766 763 765 757 761 762 757 761 760 750 736 734 732 704 689 693 688 680 694 684 702 683 677 671 680 708 700 700 703 693 710 701 689 711 724 702 709 694 695 703 706 674 697 691 708 676 697 716 711 706 710 648 702 698 710 712 684 701 713 724 708 710 717 706 705 666 702 714 724 715 721 715 711 723 693 716 701 700 719 715 698 728 679 714 695 693 706 694'.split(' ').map(Number));
var volume = document.getElementById('volume');
[674, 724].forEach(function (y) { path(volume, 'M68 ' + (y + 0.5) + 'H1662', '#a00000', { 'stroke-dasharray': '1 1' }); });
var vf = '', vh = '';
candles.forEach(function (c, i) {
  var x = X(i);
  if (c[0] === 'c') vf += 'M' + (x - 2.5) + ' ' + vol[i] + 'h5V774h-5z';
  else vh += 'M' + (x - 2) + ' ' + (vol[i] + 0.5) + 'h4V773.5h-4z';
});
path(volume, vf, 'none', { fill: '#00ffff' });
path(volume, vh, '#ff3c3c');
var pre = [690, 690, 690, 690, 690, 690, 690, 690, 704, 704, 704, 704];
path(volume, poly(average(pre.concat(vol), 5, 12)), '#ffffff');
path(volume, poly(average(pre.concat(vol), 13, 12)), '#f0f000');

/* MACD histogram: y of each tip, zero line at 898 */
var hist = ('913 899 897 879 857 862 843 842 844 855 868 874 904 950 969 976 991 988 992 978 984 959 932 910 906 916 897 886 894 886 901 903 891 873 850 844 858 865 873 905 907 899 900 894 882 875 875 879 907 915 939 966 976 972 981 985 989 988 972 951 ' +
'894 873 853 858 869 858 843 839 820 805 806 812 821 816 807 815 813 816 819 833 858 852 841 851 853 866 873 895 887 885 910 926 939 932 951 963 945 910 883 877 868 912 948 971 971 972 962 935 913 905 894 891 904 908 893 884 884 909 935 953 ' +
'978 971 970 967 961 967 944 927 920 906 889 870 860 855 878 904 916 936 941 942 935 922 927 946 938 928 919 927 902 892 890 895 894 904 909 907 905 929 930 938 958 967 961 933 909 874 859 860 898 924 924 942 927 908 910 869 832 820 805 796 ' +
'802 814 797 796 805 820 845 847 858 861 871 886 866 864 886 901 913 910 931 943 915 896 879 868 845 849 851 868 888 898 911 931 956 973 983 969 960 973 969 956 937 933 925 919 919 930 944 945 928 926 917 901 892 862 849 870 899 909 926 916 904 886 878 896 901 907 918').split(' ').map(Number);
var deaKeys = pairs('0,886 2,886 3,883 5,876 6,872 8,863 10,857 11,854 12,854 13,859 15,872 17,886 18,894 20,909 22,916 25,919 29,916 31,917 33,915 35,907 37,899 38,897 43,898 46,894 47,892 49,893 50,897 52,910 54,923 56,936 57,944 59,955 61,953 62,948 65,940 67,929 69,916 71,902 73,886 75,873 77,858 79,846 81,838 82,833 84,826 86,821 89,819 91,822 92,825 95,837 97,842 98,842 100,837 101,838 102,843 104,854 106,865 107,869 109,870 111,870 113,871 116,868 117,869 118,872 120,883 122,896 124,907 125,913 127,919 128,920 130,920 132,914 133,910 134,908 136,910 138,918 140,924 142,928 144,936 147,942 148,943 150,942 152,942 156,943 158,949 159,953 161,964 162,968 163,971 164,972 165,971 166,967 167,963 168,963 170,967 172,974 174,976 175,973 176,967 177,961 179,944 181,929 183,912 184,905 185,897 187,889 189,882 191,879 193,873 195,873 197,875 199,881 201,882 202,880 203,878 205,869 206,866 207,862 208,862 209,862 210,862 211,866 213,877 215,889 216,895 218,907 220,915 222,921 224,923 226,931 227,934 230,940 232,941 233,937 234,932 236,930 238,933 240,935 242,933 244,932 246,936');
var macd = document.getElementById('macd');
[823, 973].forEach(function (y) { path(macd, 'M68 ' + (y + 0.5) + 'H1662', '#a00000', { 'stroke-dasharray': '1 1' }); });
path(macd, 'M68 898.5H1662', '#ff2020', { 'stroke-dasharray': '1 1' });
var up = '', down = '';
hist.forEach(function (y, i) {
  var s = 'M' + X(i) + ' 898V' + y;
  if (y < 898) up += s; else down += s;
});
path(macd, up, '#ff3c3c');
path(macd, down, '#00ffff');
var dea = [], diff = [], k = 0;
for (var i = 0; i < hist.length; i++) {
  while (deaKeys[k + 1][0] < i) k++;
  var a = deaKeys[k], b = deaKeys[k + 1];
  var v = a[1] + (b[1] - a[1]) * (i - a[0]) / (b[0] - a[0]);
  dea.push([X(i), v]);
  diff.push([X(i), v + (hist[i] - 898) / 2]);
}
path(macd, poly(diff), '#f4f4f4');
path(macd, poly(dea), '#f0f000');

/* month labels under the plots */
var dates = document.getElementById('dates');
[['202307', 68], ['09', 267], ['10', 387], ['11', 489], ['12', 621], ['202401', 735], ['02', 878], ['03', 969], ['04', 1094], ['05', 1214], ['06', 1334], ['07', 1448]].forEach(function (d) {
  var s = document.createElement('span');
  s.textContent = d[0];
  s.style.left = ((d[1] - 67) / 15.95).toFixed(2) + '%';
  dates.appendChild(s);
});
```
